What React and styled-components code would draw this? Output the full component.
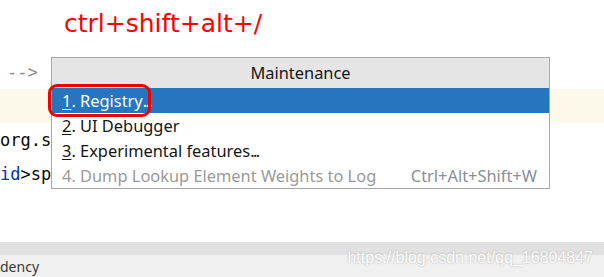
import React from "react"
import styled, { createGlobalStyle } from "styled-components"

const GlobalStyle = createGlobalStyle`
  html, body {
    margin: 0;
    padding: 0;
    background: #ffffff;
  }
  body {
    width: 604px;
    height: 277px;
    overflow: hidden;
  }
`

const Page = styled.div`
  position: relative;
  width: 604px;
  height: 277px;
  display: flex;
  flex-direction: column;
  overflow: hidden;
`

const Title = styled.div`
  height: 55px;
  box-sizing: border-box;
  padding: 11px 0 0 64px;
  font-family: "DejaVu Sans", sans-serif;
  font-size: 25px;
  line-height: 25px;
  color: #ff0000;
`

const Editor = styled.div`
  flex: 1;
  display: flex;
  flex-direction: column;
  font-family: "DejaVu Sans Mono", monospace;
  font-size: 17px;
  color: #080808;
`

const CodeLine = styled.div`
  height: 34px;
  line-height: 34px;
  white-space: pre;
  padding-left: ${(p) => p.$indent || 0}px;
  background: ${(p) => (p.$current ? "#fcf9eb" : "transparent")};
`

const Comment = styled.span`
  color: #8c8c8c;
`

const Keyword = styled.span`
  color: #0033b3;
`

const Divider = styled.div`
  height: 13px;
  background: #e1e1e1;
`

const StatusBar = styled.div`
  height: 22px;
  background: #f0f0f0;
  font-family: "Noto Sans", sans-serif;
  font-size: 14px;
  line-height: 24px;
  color: #3a3a3a;
  white-space: nowrap;
`

const Popup = styled.div`
  position: absolute;
  left: 51px;
  top: 57px;
  width: 499px;
  height: 132px;
  box-sizing: border-box;
  border: 1px solid #a8a8a8;
  background: #ffffff;
  font-family: "Noto Sans", sans-serif;
  font-size: 16.4px;
`

const PopupHeader = styled.div`
  height: 30px;
  line-height: 30px;
  background: #e5e5e5;
  text-align: center;
  color: #151515;
`

const Item = styled.div`
  height: 25px;
  line-height: 25px;
  display: flex;
  justify-content: space-between;
  padding: 0 12px 0 10px;
  white-space: nowrap;
  background: ${(p) => (p.$selected ? "#2675bf" : "transparent")};
  color: ${(p) =>
    p.$selected ? "#ffffff" : p.$disabled ? "#9a9a9a" : "#151515"};
`

const Mnemonic = styled.span`
  text-decoration: underline;
  text-underline-offset: 2px;
`

const Dots = styled.span`
  letter-spacing: -1.6px;
`

const Shortcut = styled.span`
  color: #8a8e96;
`

const Highlight = styled.div`
  position: absolute;
  left: 48px;
  top: 84px;
  width: 103px;
  height: 33px;
  box-sizing: border-box;
  border: 3px solid #f00000;
  border-radius: 9px;
`

const Watermark = styled.div`
  position: absolute;
  right: 11px;
  top: 249px;
  font-family: "Liberation Sans", Arial, sans-serif;
  font-size: 16px;
  line-height: 18px;
  color: rgba(255, 255, 255, 0.95);
  text-shadow: 0 0 2px rgba(90, 90, 90, 0.45);
`

const items = [
  { key: "1", label: ". Registry", more: true, selected: true },
  { key: "2", label: ". UI Debugger" },
  { key: "3", label: ". Experimental features", more: true },
  {
    label: "4. Dump Lookup Element Weights to Log",
    shortcut: "Ctrl+Alt+Shift+W",
    disabled: true,
  },
]

export default function App() {
  return (
    <Page>
      <GlobalStyle />
      <Title>ctrl+shift+alt+/</Title>
      <Editor>
        <CodeLine $indent={7}>
          <Comment>--&gt;</Comment>
        </CodeLine>
        <CodeLine $current />
        <CodeLine $indent={-1}>org.s</CodeLine>
        <CodeLine $indent={-7}>
          <Keyword>id</Keyword>&gt;sp
        </CodeLine>
      </Editor>
      <Divider />
      <StatusBar>dency</StatusBar>

      <Popup>
        <PopupHeader>Maintenance</PopupHeader>
        {items.map((it, i) => (
          <Item key={i} $selected={it.selected} $disabled={it.disabled}>
            <span>
              {it.key && <Mnemonic>{it.key}</Mnemonic>}
              {it.label}
              {it.more && <Dots>...</Dots>}
            </span>
            {it.shortcut && <Shortcut>{it.shortcut}</Shortcut>}
          </Item>
        ))}
      </Popup>
      <Highlight />
      <Watermark>https://blog.csdn.net/qq_16804847</Watermark>
    </Page>
  )
}
